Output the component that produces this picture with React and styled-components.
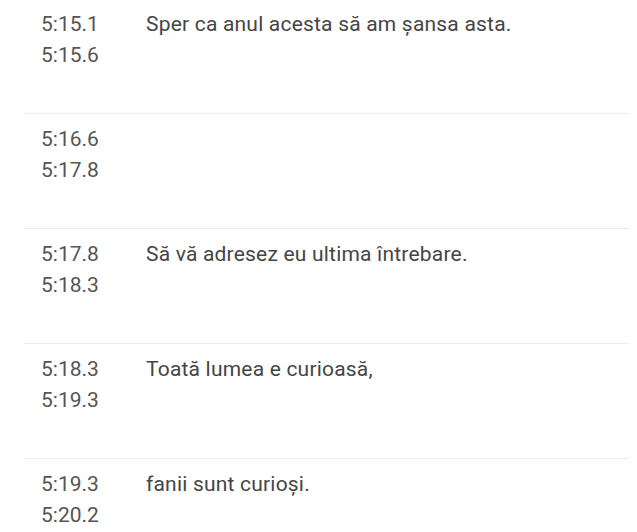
import React from 'react';
import styled, { createGlobalStyle } from 'styled-components';

const GlobalStyle = createGlobalStyle`
    body{
        margin: 0;
        background: #fff;
        font-family: Roboto, "Noto Sans", sans-serif;
    }
`;

const List = styled.div`
    margin: -2px 8px 0 24px;
`;

const Row = styled.div`
    display: grid;
    grid-template-columns: 105px 1fr;
    padding: 10px 0 42px 17px;
    border-top: 1px solid #ececec;
    &:first-child{border-top: 1px solid transparent;}
`;

const Times = styled.div`
    display: flex;
    flex-direction: column;
    font-size: 21px;
    line-height: 31px;
    color: #555;
`;

const Caption = styled.p`
    margin: 0;
    font-size: 21px;
    line-height: 31px;
    letter-spacing: 0.2px;
    color: #454545;
`;

const cues = [
    {start: '5:15.1', end: '5:15.6', text: 'Sper ca anul acesta să am șansa asta.'},
    {start: '5:16.6', end: '5:17.8', text: ''},
    {start: '5:17.8', end: '5:18.3', text: 'Să vă adresez eu ultima întrebare.'},
    {start: '5:18.3', end: '5:19.3', text: 'Toată lumea e curioasă,'},
    {start: '5:19.3', end: '5:20.2', text: 'fanii sunt curioși.'},
];

const App = () => {
    return (
        <>
            <GlobalStyle />
            <List>
                {cues.map((cue) => (
                    <Row key={cue.start}>
                        <Times>
                            <span>{cue.start}</span>
                            <span>{cue.end}</span>
                        </Times>
                        <Caption>{cue.text}</Caption>
                    </Row>
                ))}
            </List>
        </>
    )
}

export default App
